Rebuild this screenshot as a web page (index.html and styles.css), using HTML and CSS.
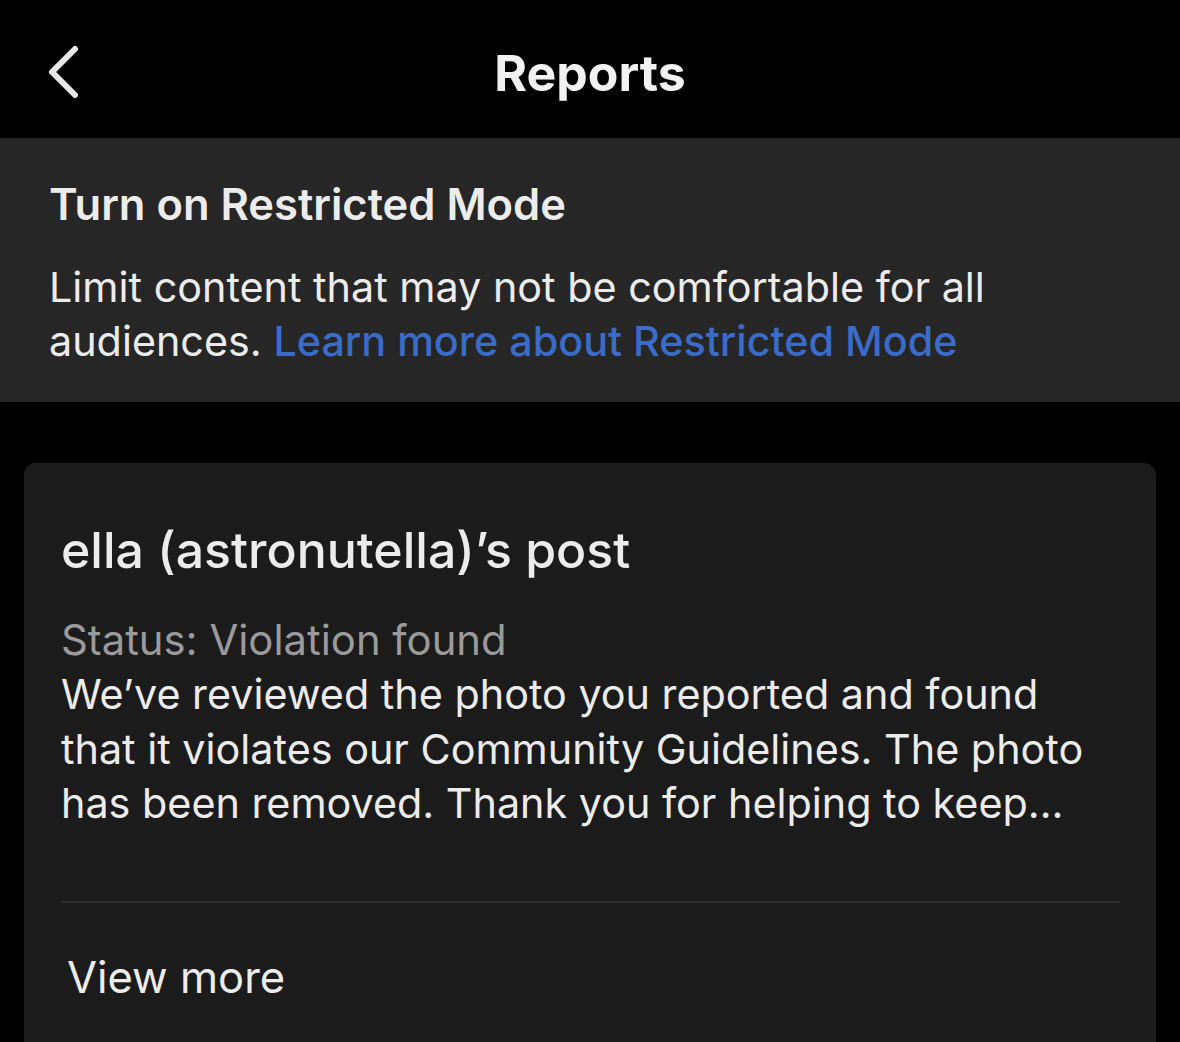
FILE: index.html
```html
<!DOCTYPE html>
<html lang="en">
<head>
  <meta charset="UTF-8" />
  <meta name="viewport" content="width=device-width, initial-scale=1.0" />
  <title>Reports</title>
  <link rel="stylesheet" href="styles.css">
</head>
<body>
  <header class="topbar">
    <a href="#" class="back" aria-label="Back">
      <svg width="40" height="56" viewBox="0 0 40 56">
        <path d="M28 5 L5 28 L28 51" fill="none" stroke="#e8e8e8" stroke-width="6" stroke-linecap="round" stroke-linejoin="round"/>
      </svg>
    </a>
    <h1>Reports</h1>
    <span></span>
  </header>

  <section class="restricted">
    <h2>Turn on Restricted Mode</h2>
    <p><span>Limit content that may not be comfortable for all audiences.</span> <a href="#">Learn more about Restricted Mode</a></p>
  </section>

  <main>
    <div class="report-card">
      <h3>ella (astronutella)’s post</h3>
      <p class="status">Status: Violation found</p>
      <p class="summary">We’ve reviewed the photo you reported and found that it violates our Community Guidelines. The photo has been removed. Thank you for helping to keep…</p>
      <hr>
      <a href="#" class="more">View more</a>
    </div>
  </main>
</body>
</html>
```

FILE: styles.css
```css
body {
  margin: 0;
  background: #000;
  color: #ececec;
  font-family: Inter, "Liberation Sans", sans-serif;
  overflow: hidden;
}
a {
  text-decoration: none;
}
.topbar {
  height: 138px;
  display: grid;
  grid-template-columns: 120px 1fr 120px;
  align-items: center;
}
.back {
  display: flex;
  padding-left: 47px;
  margin-top: 6px;
}
.topbar h1 {
  margin: 0;
  margin-top: 8px;
  text-align: center;
  font-size: 50px;
  font-weight: 700;
  color: #f2f2f2;
}
.restricted {
  background: #262626;
  height: 264px;
  box-sizing: border-box;
  padding: 36px 49px 0;
}
.restricted h2 {
  margin: 0 0 26px;
  font-size: 43.5px;
  font-weight: 600;
  line-height: 60px;
}
.restricted p {
  margin: 0;
  font-size: 41.3px;
  line-height: 54px;
}
.restricted p a {
  color: #3a6bc6;
  font-weight: 500;
}
main {
  padding: 61px 24px 0;
}
.report-card {
  background: #1b1b1b;
  border-radius: 12px;
  padding: 57px 36px 60px 37px;
  height: 600px;
}
.report-card h3 {
  margin: 0 0 33px;
  font-size: 50px;
  font-weight: 500;
  line-height: 60px;
}
.status {
  margin: 0;
  color: #9a9a9a;
  font-size: 41.8px;
  line-height: 54px;
}
.summary {
  margin: 0;
  font-size: 41.3px;
  line-height: 54.5px;
}
.report-card hr {
  border: none;
  border-top: 2px solid #2c2c2c;
  margin: 70px 0 0;
}
.more {
  display: block;
  margin-top: 47px;
  padding-left: 6px;
  color: #ececec;
  font-size: 43.5px;
  line-height: 54px;
}
```
